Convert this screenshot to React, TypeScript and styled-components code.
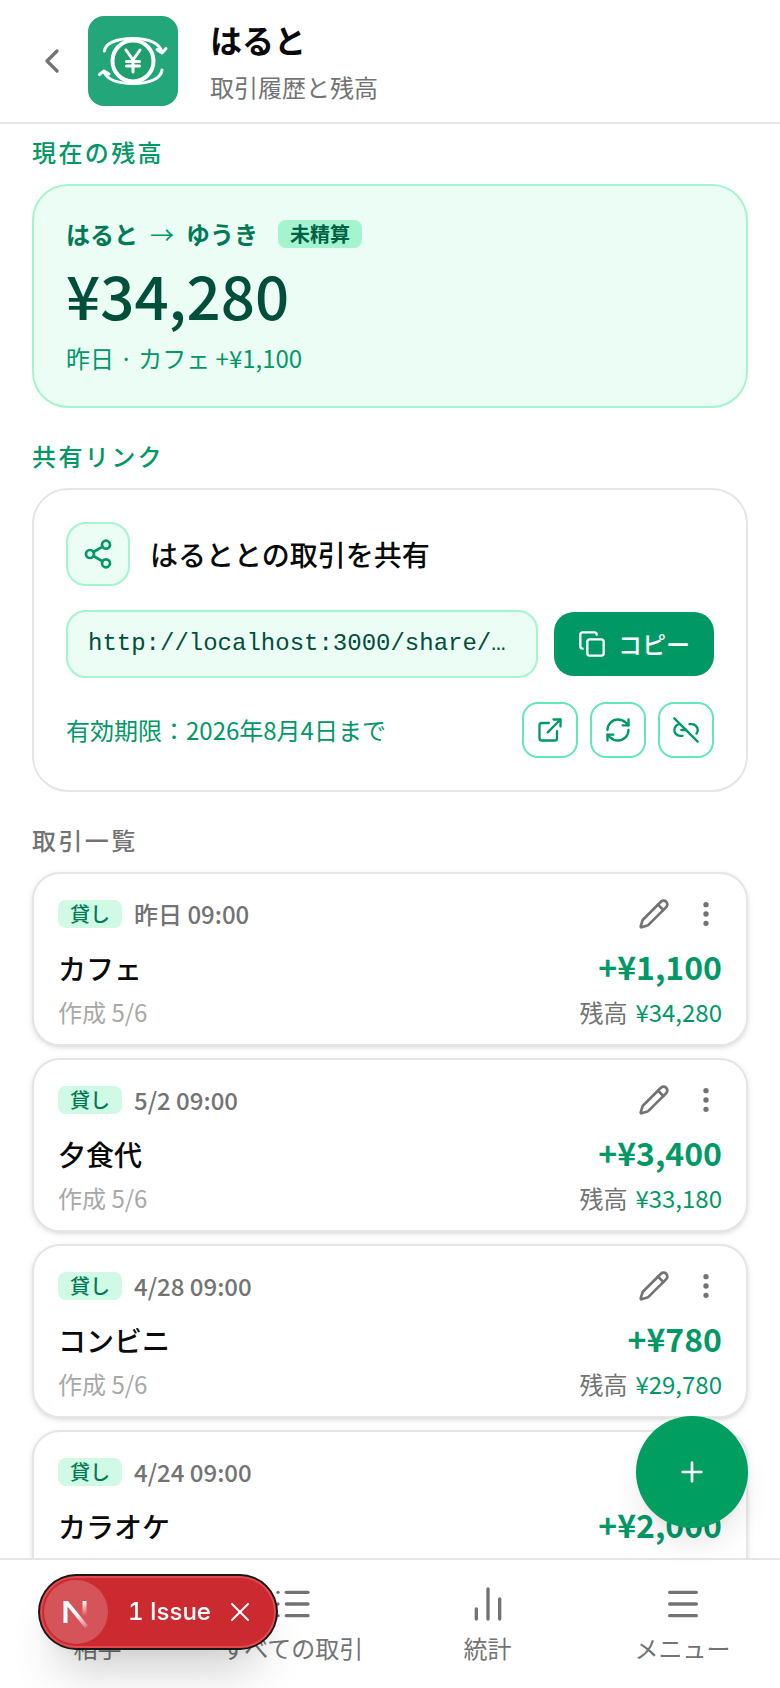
import React from "react";
import styled, { createGlobalStyle, css } from "styled-components";
import {
  ChartNoAxesColumn, ChevronLeft, Copy, EllipsisVertical, ExternalLink, Link2Off,
  List, Menu, Pencil, Plus, RefreshCw, Share2, Users, X,
} from "lucide-react";

const color = {
  text: "#0a0a0a",
  muted: "#737373",
  faint: "#a8a8a8",
  line: "#e5e5e5",
  green50: "#ecfdf5",
  green100: "#d0fae5",
  green200: "#a4f4cf",
  green300: "#5ee9b5",
  green600: "#009966",
  green700: "#007a55",
  green800: "#006045",
  green900: "#004f3b",
};

const GlobalStyle = createGlobalStyle`
  * { box-sizing: border-box; }
  body {
    margin: 0;
    background: #fff;
    color: ${color.text};
    font-family: "Noto Sans CJK JP", sans-serif;
    font-size: 24px;
    line-height: 32px;
  }
  h1, h2, h3, p, ul { margin: 0; padding: 0; }
  ul { list-style: none; }
  button { font: inherit; color: inherit; border: 0; padding: 0; background: none; cursor: pointer; }
  a { color: inherit; text-decoration: none; }
  svg { display: block; flex: none; }
`;

const Screen = styled.div`
  height: 100vh;
  display: flex;
  flex-direction: column;
  overflow: hidden;
`;

const Header = styled.header`
  display: flex;
  align-items: center;
  padding: 16px 32px;
  border-bottom: 2px solid ${color.line};
`;

const BackLink = styled.a`
  color: ${color.muted};
  margin-right: 16px;
`;

const HeaderText = styled.div`
  display: flex;
  flex-direction: column;
  gap: 12px;
  margin-left: 32px;
`;

const Title = styled.h1`
  font-size: 32px;
  line-height: 40px;
  font-weight: 700;
`;

const Subtitle = styled.p`
  color: ${color.muted};
`;

const Content = styled.main`
  flex: 1;
  min-height: 0;
  overflow: hidden;
  padding: 12px 32px 0;
  display: flex;
  flex-direction: column;
  gap: 32px;
`;

const Section = styled.section`
  flex: none;
  display: flex;
  flex-direction: column;
  gap: 16px;
`;

const SectionTitle = styled.h2<{ $muted?: boolean }>`
  font-size: 24px;
  font-weight: 500;
  letter-spacing: 0.1em;
  color: ${(p) => (p.$muted ? color.muted : color.green600)};
`;

const Panel = styled.div<{ $tinted?: boolean }>`
  padding: 32px;
  border-radius: 36px;
  border: 2px solid ${(p) => (p.$tinted ? color.green200 : color.line)};
  background: ${(p) => (p.$tinted ? color.green50 : "#fff")};
`;

const Badge = styled.span<{ $strong?: boolean }>`
  padding: 0 12px;
  border-radius: 8px;
  font-size: 20px;
  line-height: 28px;
  font-weight: ${(p) => (p.$strong ? 600 : 500)};
  color: ${(p) => (p.$strong ? color.green800 : color.green700)};
  background: ${(p) => (p.$strong ? color.green200 : color.green100)};
`;

const Parties = styled.div`
  display: flex;
  align-items: center;
  gap: 12px;
  font-weight: 600;
  color: ${color.green700};
`;

const Arrow = styled.span`
  font-weight: 400;
  color: ${color.green600};
`;

const StatusBadge = styled(Badge)`
  margin-left: 8px;
`;

const Balance = styled.p`
  margin: 8px 0 12px;
  font-size: 60px;
  line-height: 72px;
  font-weight: 500;
  color: ${color.green900};
`;

const GreenNote = styled.p`
  color: ${color.green600};
`;

const ShareCard = styled(Panel)`
  display: flex;
  flex-direction: column;
  gap: 24px;
`;

const ShareHead = styled.div`
  display: flex;
  align-items: center;
  gap: 20px;
`;

const ShareIcon = styled.span`
  width: 64px;
  height: 64px;
  display: grid;
  place-items: center;
  border: 2px solid ${color.green200};
  border-radius: 20px;
  background: ${color.green50};
  color: ${color.green600};
`;

const ShareTitle = styled.h3`
  font-size: 28px;
  line-height: 40px;
  font-weight: 500;
`;

const CopyRow = styled.div`
  display: flex;
  align-items: center;
  gap: 16px;
`;

const UrlField = styled.input`
  flex: 1;
  min-width: 0;
  height: 68px;
  padding: 0 20px 2px;
  border: 2px solid ${color.green200};
  border-radius: 20px;
  background: ${color.green50};
  color: ${color.green900};
  font: 24px/32px "Liberation Mono", monospace;
  text-overflow: ellipsis;
  outline: none;
`;

const CopyButton = styled.button`
  display: flex;
  align-items: center;
  gap: 12px;
  height: 64px;
  padding: 0 24px;
  border-radius: 20px;
  background: ${color.green600};
  color: #fff;
  font-weight: 500;
`;

const ShareFoot = styled.div`
  display: flex;
  align-items: center;
  justify-content: space-between;
`;

const Actions = styled.div<{ $gap: number }>`
  display: flex;
  gap: ${(p) => p.$gap}px;
`;

const SquareButton = styled.button`
  width: 56px;
  height: 56px;
  display: grid;
  place-items: center;
  border: 2px solid ${color.green300};
  border-radius: 16px;
  color: ${color.green600};
`;

const EntryList = styled.ul`
  display: flex;
  flex-direction: column;
  gap: 12px;
`;

const Entry = styled.li`
  padding: 16px 24px;
  border: 2px solid ${color.line};
  border-radius: 28px;
  background: #fff;
  box-shadow: 0 2px 6px rgba(0, 0, 0, 0.1), 0 2px 4px -2px rgba(0, 0, 0, 0.1);
`;

const row = css`
  display: flex;
  justify-content: space-between;
`;

const EntryTop = styled.div`
  ${row}
  align-items: center;
  height: 48px;
`;

const EntryWhen = styled.div`
  display: flex;
  align-items: center;
  gap: 12px;
  font-weight: 500;
  color: ${color.muted};
`;

const IconButton = styled.button`
  color: ${color.muted};
`;

const EntryMain = styled.div`
  ${row}
  align-items: baseline;
  height: 50px;
  margin: 4px 0;
  line-height: 48px;
`;

const EntryName = styled.h3`
  font-size: 28px;
  font-weight: 500;
`;

const EntryAmount = styled.span`
  font-size: 32px;
  font-weight: 700;
  color: ${color.green600};
`;

const EntryMeta = styled.div`
  ${row}
  color: ${color.faint};
`;

const EntryBalance = styled.span`
  display: flex;
  gap: 8px;
  color: ${color.muted};
`;

const EntryBalanceValue = styled.span`
  color: ${color.green600};
`;

const NavBar = styled.nav`
  flex: none;
  display: grid;
  grid-template-columns: repeat(4, 1fr);
  padding: 24px 0;
  border-top: 2px solid ${color.line};
  background: #fff;
`;

const NavItem = styled.a`
  display: flex;
  flex-direction: column;
  align-items: center;
  gap: 8px;
  color: ${color.muted};
`;

const AddButton = styled.button`
  position: fixed;
  right: 32px;
  bottom: 160px;
  width: 112px;
  height: 112px;
  display: grid;
  place-items: center;
  border-radius: 50%;
  background: #009e60;
  color: #fff;
  box-shadow: 0 20px 30px -6px rgba(0, 0, 0, 0.1), 0 8px 12px -8px rgba(0, 0, 0, 0.1);
`;

const IssueToast = styled.div`
  position: fixed;
  left: 40px;
  bottom: 40px;
  width: 236px;
  height: 72px;
  display: flex;
  align-items: center;
  padding: 2px;
  border-radius: 36px;
  border: 2px solid #e5484d;
  background: #ca2a30;
  color: #fff;
  box-shadow: 0 0 0 2px #171717, 0 32px 48px -16px rgba(0, 0, 0, 0.24), 0 8px 16px rgba(0, 0, 0, 0.04);
`;

const IssueLogo = styled.button`
  width: 64px;
  height: 64px;
  display: grid;
  place-items: center;
  border-radius: 50%;
  background: rgba(255, 255, 255, 0.2);
`;

const IssueLabel = styled.button`
  margin-left: 20px;
  white-space: nowrap;
  font: 500 24px/32px Inter, sans-serif;
  font-variant-numeric: tabular-nums;
`;

const IssueClose = styled.button`
  margin: 0 16px 0 auto;
`;

const LogoMark = () => (
  <svg width="90" height="90" viewBox="0 0 90 90" fill="none" stroke="#fff" strokeLinecap="round" strokeLinejoin="round" role="img" aria-label="ロゴ">
    <rect width="90" height="90" rx="16" fill="#22a67a" stroke="none" />
    <circle cx="45" cy="45" r="20.5" strokeWidth="4" fill="#1f9e6e" />
    <path d="M16.5 35C17 28 27 22.5 45 22.5C60 22.5 71 27 74 36M69 33.500l5 3.500l4-4.500" strokeWidth="3" />
    <path d="M74 54C73 62 63 67.500 45 67.500C31 67.500 20 65 16 56M11.500 58.500l4.500-3.500l5 3" strokeWidth="3" />
    <path d="M38 34l7 10l7-10M45 44v12M38.500 45.500h13M38.500 50h13" strokeWidth="3" />
  </svg>
);

const NextMark = () => (
  <svg width="28" height="32" viewBox="0 0 28 32" fill="none" aria-hidden="true">
    <defs>
      <linearGradient id="diag" x1="15" y1="18" x2="26" y2="33" gradientUnits="userSpaceOnUse">
        <stop stopColor="#fff" />
        <stop offset="1" stopColor="#fff" stopOpacity="0.1" />
      </linearGradient>
      <linearGradient id="stem" x1="22" y1="5" x2="22" y2="20" gradientUnits="userSpaceOnUse">
        <stop stopColor="#fff" />
        <stop offset="1" stopColor="#fff" stopOpacity="0" />
      </linearGradient>
    </defs>
    <path d="M1.500 27V5H6L26 29.500L23 32L5.500 10.500V27Z" fill="url(#diag)" />
    <path d="M20.500 5h4v15h-4z" fill="url(#stem)" />
  </svg>
);

const entries = [
  { when: "昨日 09:00", name: "カフェ", amount: "+¥1,100", created: "作成 5/6", balance: "¥34,280" },
  { when: "5/2 09:00", name: "夕食代", amount: "+¥3,400", created: "作成 5/6", balance: "¥33,180" },
  { when: "4/28 09:00", name: "コンビニ", amount: "+¥780", created: "作成 5/6", balance: "¥29,780" },
  { when: "4/24 09:00", name: "カラオケ", amount: "+¥2,000", created: "作成 5/6", balance: "¥29,000" },
];

const navItems = [
  { label: "相手", Icon: Users },
  { label: "すべての取引", Icon: List },
  { label: "統計", Icon: ChartNoAxesColumn },
  { label: "メニュー", Icon: Menu },
];

export default function App() {
  return (
    <>
      <GlobalStyle />
      <Screen>
        <Header>
          <BackLink href="#" aria-label="戻る"><ChevronLeft size={40} /></BackLink>
          <LogoMark />
          <HeaderText>
            <Title>はると</Title>
            <Subtitle>取引履歴と残高</Subtitle>
          </HeaderText>
        </Header>

        <Content>
          <Section>
            <SectionTitle>現在の残高</SectionTitle>
            <Panel $tinted>
              <Parties>
                <span>はると</span>
                <Arrow>→</Arrow>
                <span>ゆうき</span>
                <StatusBadge $strong>未精算</StatusBadge>
              </Parties>
              <Balance>¥34,280</Balance>
              <GreenNote>昨日 · カフェ +¥1,100</GreenNote>
            </Panel>
          </Section>

          <Section>
            <SectionTitle>共有リンク</SectionTitle>
            <ShareCard>
              <ShareHead>
                <ShareIcon><Share2 size={32} /></ShareIcon>
                <ShareTitle>はるととの取引を共有</ShareTitle>
              </ShareHead>
              <CopyRow>
                <UrlField readOnly aria-label="共有リンク" value="http://localhost:3000/share/haruto-yuki" />
                <CopyButton><Copy size={28} />コピー</CopyButton>
              </CopyRow>
              <ShareFoot>
                <GreenNote>有効期限：2026年8月4日まで</GreenNote>
                <Actions $gap={12}>
                  <SquareButton aria-label="開く"><ExternalLink size={28} /></SquareButton>
                  <SquareButton aria-label="再発行"><RefreshCw size={28} /></SquareButton>
                  <SquareButton aria-label="無効にする"><Link2Off size={28} /></SquareButton>
                </Actions>
              </ShareFoot>
            </ShareCard>
          </Section>

          <Section>
            <SectionTitle $muted>取引一覧</SectionTitle>
            <EntryList>
              {entries.map((e) => (
                <Entry key={e.when}>
                  <EntryTop>
                    <EntryWhen><Badge>貸し</Badge>{e.when}</EntryWhen>
                    <Actions $gap={20}>
                      <IconButton aria-label="編集"><Pencil size={32} /></IconButton>
                      <IconButton aria-label="その他"><EllipsisVertical size={32} /></IconButton>
                    </Actions>
                  </EntryTop>
                  <EntryMain>
                    <EntryName>{e.name}</EntryName>
                    <EntryAmount>{e.amount}</EntryAmount>
                  </EntryMain>
                  <EntryMeta>
                    <span>{e.created}</span>
                    <EntryBalance>残高<EntryBalanceValue>{e.balance}</EntryBalanceValue></EntryBalance>
                  </EntryMeta>
                </Entry>
              ))}
            </EntryList>
          </Section>
        </Content>

        <NavBar>
          {navItems.map(({ label, Icon }) => (
            <NavItem key={label} href="#"><Icon size={40} />{label}</NavItem>
          ))}
        </NavBar>
      </Screen>

      <AddButton aria-label="取引を追加"><Plus size={32} /></AddButton>

      <IssueToast>
        <IssueLogo aria-label="開発ツール"><NextMark /></IssueLogo>
        <IssueLabel>1 Issue</IssueLabel>
        <IssueClose aria-label="閉じる"><X size={32} strokeWidth={1.5} /></IssueClose>
      </IssueToast>
    </>
  );
}
